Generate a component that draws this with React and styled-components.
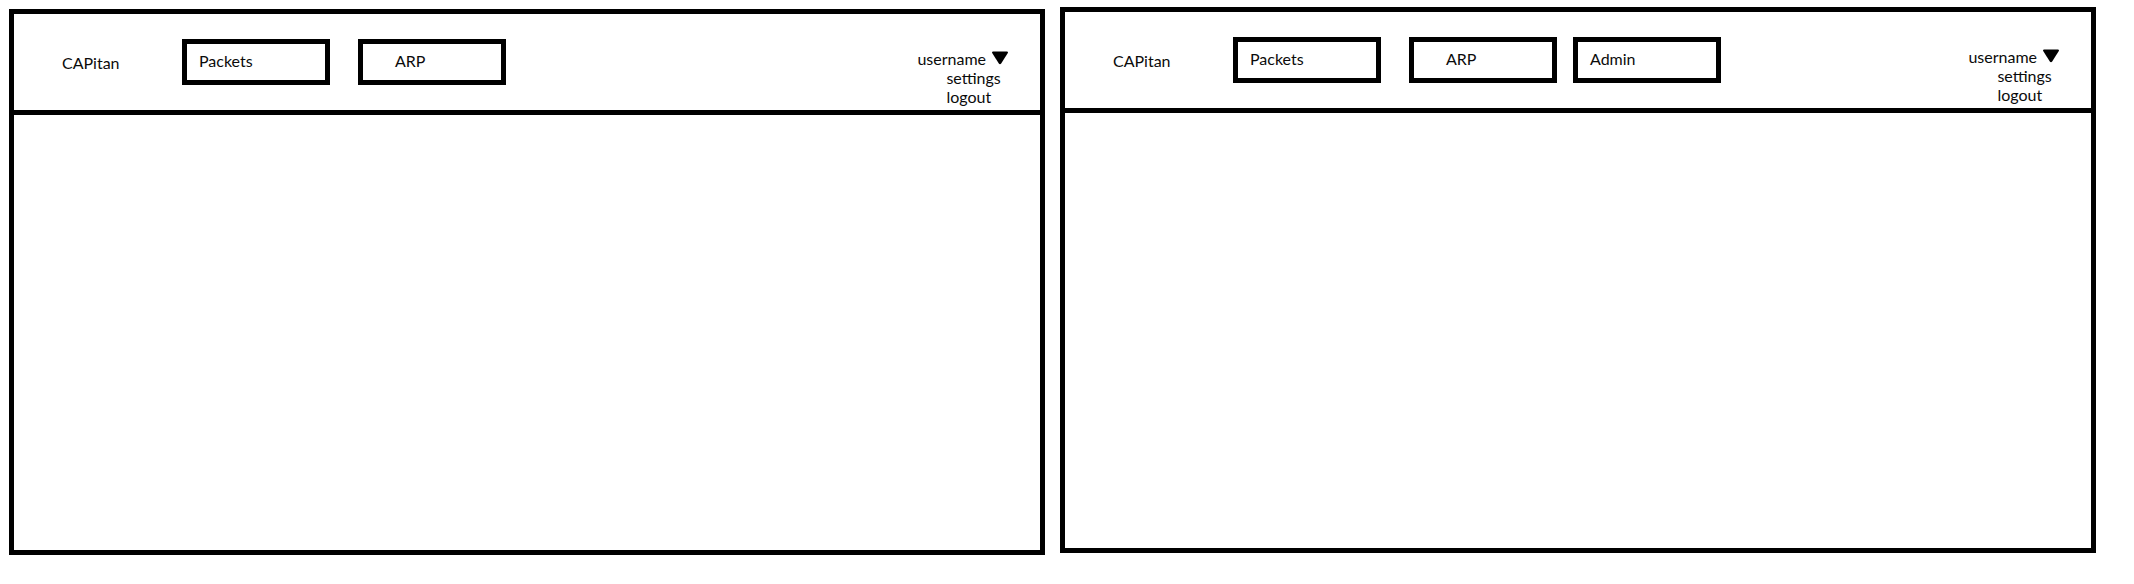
import React from 'react'
import styled, { createGlobalStyle } from 'styled-components'

const GlobalStyle = createGlobalStyle`
  html, body {
    margin: 0;
    padding: 0;
    background: #ffffff;
  }
  body {
    font-family: Lato, 'Liberation Sans', sans-serif;
    color: #0b0b0b;
  }
`

const Page = styled.div`
  display: flex;
  align-items: flex-start;
  gap: 15px;
  padding: 9px 0 0 9px;
`

const Frame = styled.section`
  box-sizing: border-box;
  width: 1036px;
  height: 546px;
  border: 5px solid #000;
  margin-top: ${p => p.$shift || 0}px;
  display: flex;
  flex-direction: column;
`

const Header = styled.header`
  box-sizing: border-box;
  height: 101px;
  border-bottom: 5px solid #000;
  display: flex;
  align-items: center;
  padding: 0 31px 0 48px;
`

const Brand = styled.div`
  width: 120px;
  font-size: 16px;
  line-height: 20px;
  margin-top: 2px;
`

const NavBox = styled.div`
  box-sizing: border-box;
  width: 148px;
  height: 46px;
  border: 5px solid #000;
  margin-left: ${p => p.$space || 0}px;
  padding: 7px 0 0 ${p => p.$indent || 12}px;
  font-size: 16px;
  line-height: 20px;
`

const UserMenu = styled.div`
  margin-left: auto;
  align-self: flex-end;
  padding-bottom: 4px;
  font-size: 16px;
  line-height: 19px;
`

const UserName = styled.div`
  display: flex;
  align-items: center;
  gap: 5px;

  svg {
    display: block;
    margin-top: -3px;
  }
`

const MenuItem = styled.div`
  padding-left: 29px;
`

const Body = styled.div`
  flex: 1;
`

const Caret = () => (
  <svg width="18" height="15" viewBox="0 0 18 15">
    <path d="M2 1.5 H16 Q17.6 1.5 16.8 3 L10.2 13.4 Q9 15 7.8 13.4 L1.2 3 Q0.4 1.5 2 1.5 Z" fill="#000" />
  </svg>
)

function Window({ tabs, shift }) {
  return (
    <Frame $shift={shift}>
      <Header>
        <Brand>CAPitan</Brand>
        {tabs.map(t => (
          <NavBox key={t.label} $space={t.space} $indent={t.indent}>{t.label}</NavBox>
        ))}
        <UserMenu>
          <UserName>username <Caret /></UserName>
          <MenuItem>settings</MenuItem>
          <MenuItem>logout</MenuItem>
        </UserMenu>
      </Header>
      <Body />
    </Frame>
  )
}

const userTabs = [
  { label: 'Packets', space: 0, indent: 12 },
  { label: 'ARP', space: 28, indent: 32 },
]

const adminTabs = [
  { label: 'Packets', space: 0, indent: 12 },
  { label: 'ARP', space: 28, indent: 32 },
  { label: 'Admin', space: 16, indent: 12 },
]

export default function App() {
  return (
    <>
      <GlobalStyle />
      <Page>
        <Window tabs={userTabs} />
        <Window tabs={adminTabs} shift={-2} />
      </Page>
    </>
  )
}
